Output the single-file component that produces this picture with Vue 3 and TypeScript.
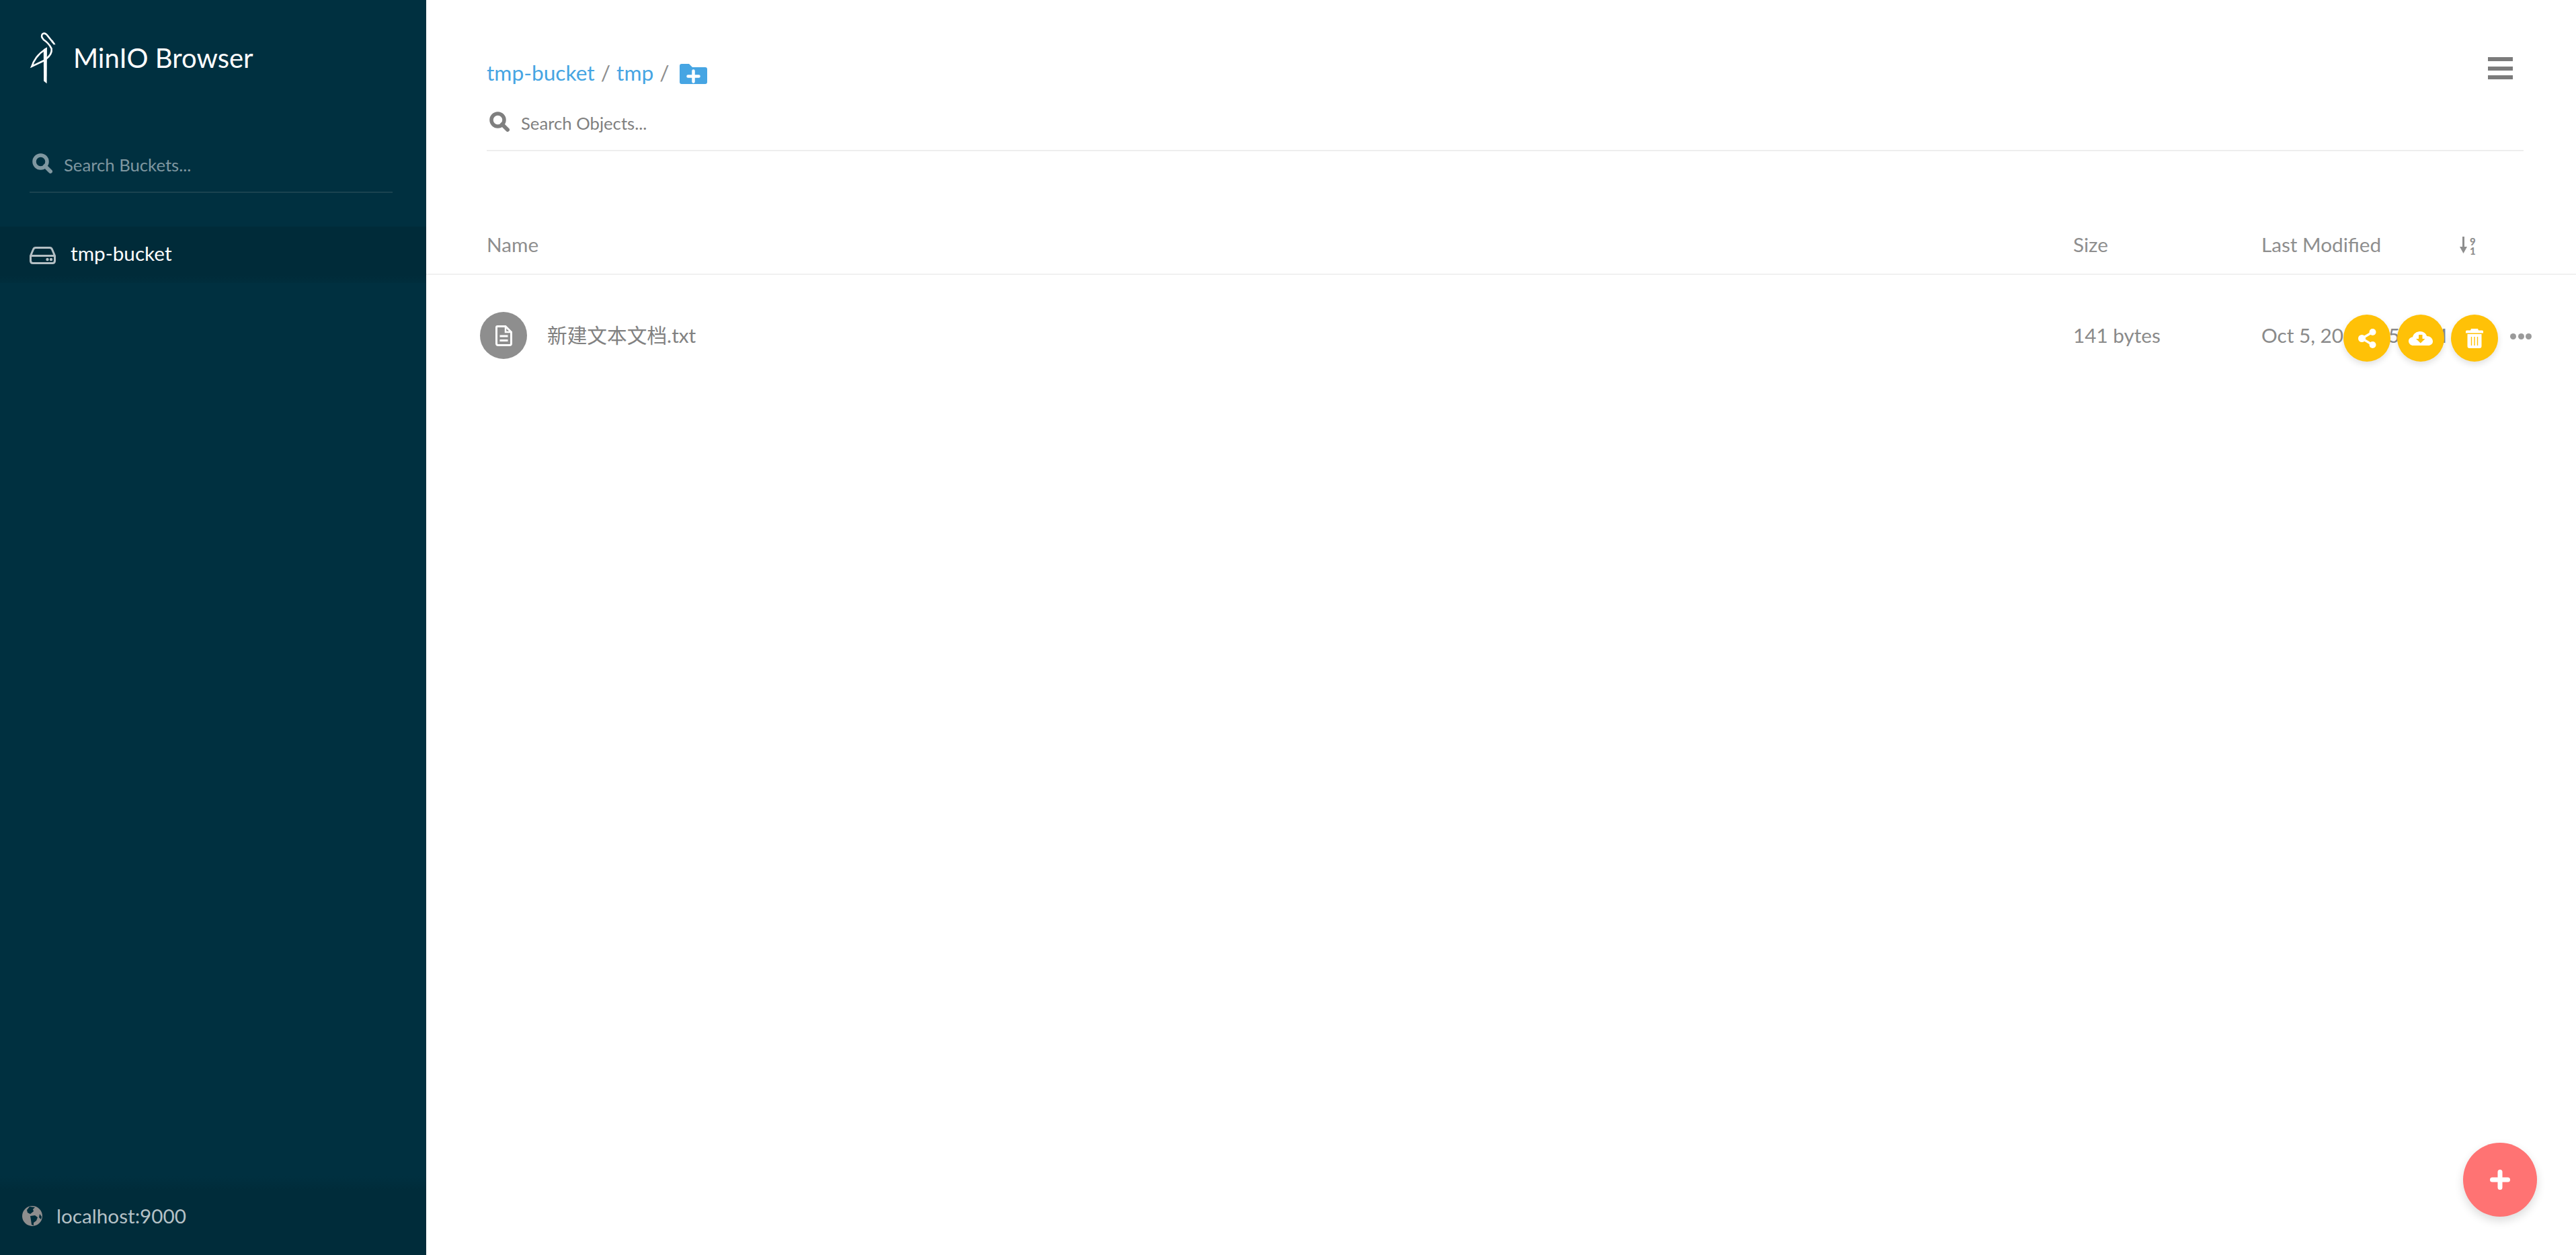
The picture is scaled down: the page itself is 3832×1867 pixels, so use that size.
<script setup lang="ts">
interface FileRow {
  name: string
  size: string
  modified: string
}
const files: FileRow[] = [
  { name: '新建文本文档.txt', size: '141 bytes', modified: 'Oct 5, 2019 3:51 PM' },
]
</script>

<template>
  <div class="app">
    <aside class="sidebar">
      <div class="brand">
        <svg class="logo" viewBox="70 45 125 245" aria-hidden="true">
          <path class="logo-line" d="M186,105 L150,60 Q138,49 129,58 Q121,68 136,84 Q160,100 172,125 Q176,150 146,174" />
          <path class="logo-line" d="M141,130 C108,150 88,182 81,207 L146,176" />
          <path class="logo-fill" d="M135,128 L151,118 L150,287 L136,275 Z" />
          <path class="logo-fill" d="M72,215 L84,195 L90,205 Z" />
          <path class="logo-fill" d="M191,108 L176,84 L172,95 Z" />
        </svg>
        <span class="brand-title">MinIO Browser</span>
      </div>
      <div class="bucket-search">
        <svg class="search-icon" viewBox="0 0 30 30" aria-hidden="true">
          <circle cx="12.5" cy="12.5" r="9.5" fill="none" stroke="currentColor" stroke-width="5.5" />
          <path d="M19,19 L27,27" stroke="currentColor" stroke-width="6" stroke-linecap="round" />
        </svg>
        <span>Search Buckets...</span>
      </div>
      <nav class="buckets">
        <div class="bucket active">
          <svg class="hdd" viewBox="0 0 39 26" aria-hidden="true">
            <path d="M9,1.5 H30 Q32.5,1.5 33.5,4 L37.5,13.5 V21 Q37.5,24.5 34,24.5 H5 Q1.5,24.5 1.5,21 V13.5 L5.5,4 Q6.5,1.5 9,1.5 Z M1.5,13.5 H37.5" fill="none" stroke="currentColor" stroke-width="3" />
            <circle cx="26.5" cy="19" r="2.2" fill="currentColor" />
            <circle cx="32" cy="19" r="2.2" fill="currentColor" />
          </svg>
          <span>tmp-bucket</span>
        </div>
      </nav>
      <footer class="host">
        <svg class="globe" viewBox="0 0 30 30" aria-hidden="true">
          <circle cx="15" cy="15" r="15" fill="#8e8e8e" />
          <path fill="#002d3b" d="M11,1 L19,2 L16,5 L17,8 L12,12 L8,10 L7,6 Z M12,15 L19,14 L23,17 L21,22 L17,25 L17,29 L14,28 L13,21 Z M26,12 L29,16 L28,20 L25,17 Z" />
        </svg>
        <span>localhost:9000</span>
      </footer>
    </aside>

    <main class="content">
      <header class="topbar">
        <div class="crumb-row">
          <div class="crumbs">
            <a class="crumb">tmp-bucket</a>
            <span class="sep">/</span>
            <a class="crumb">tmp</a>
            <span class="sep">/</span>
            <svg class="folder-add" viewBox="0 0 41 30" aria-hidden="true">
              <path fill="#46a5e3" d="M3,0 H14 L19,5 H38 Q41,5 41,8 V27 Q41,30 38,30 H3 Q0,30 0,27 V3 Q0,0 3,0 Z" />
              <path d="M12.5,18.5 H28.5 M20.5,10.5 V26.5" stroke="#fff" stroke-width="4.5" stroke-linecap="round" />
            </svg>
          </div>
          <div class="menu" aria-hidden="true"><i></i><i></i><i></i></div>
        </div>
        <div class="object-search">
          <svg class="search-icon" viewBox="0 0 30 30" aria-hidden="true">
            <circle cx="12.5" cy="12.5" r="9.5" fill="none" stroke="currentColor" stroke-width="5.5" />
            <path d="M19,19 L27,27" stroke="currentColor" stroke-width="6" stroke-linecap="round" />
          </svg>
          <span>Search Objects...</span>
        </div>
      </header>

      <div class="table-head">
        <span>Name</span>
        <span>Size</span>
        <span>Last Modified</span>
        <div class="sort">
          <svg viewBox="0 0 11 25" width="11" height="25" aria-hidden="true">
            <path d="M5.5,0 V18" stroke="#8e8e8e" stroke-width="3" />
            <path d="M0,15 H11 L5.5,25 Z" fill="#8e8e8e" />
          </svg>
          <div class="sort-digits"><span>9</span><span>1</span></div>
        </div>
      </div>

      <div v-for="file in files" :key="file.name" class="table-row">
        <div class="name-cell">
          <span class="file-badge">
            <svg viewBox="0 0 25 31" width="25" height="31" aria-hidden="true">
              <path d="M3,1.5 H15 L23.5,10 V27 Q23.5,29.5 21,29.5 H4 Q1.5,29.5 1.5,27 V3 Q1.5,1.5 3,1.5 Z" fill="none" stroke="#fff" stroke-width="3" />
              <path d="M15,2 V10 H23" fill="none" stroke="#fff" stroke-width="2.5" />
              <path d="M6.5,16 H18.5 M6.5,22.5 H18.5" stroke="#fff" stroke-width="3" />
            </svg>
          </span>
          <span>{{ file.name }}</span>
        </div>
        <span>{{ file.size }}</span>
        <span>{{ file.modified }}</span>
        <div class="row-actions">
          <button class="action" type="button" aria-label="Share">
            <svg viewBox="0 0 27 29" width="27" height="29" aria-hidden="true">
              <path d="M21.5,5 L5.5,14.5 L21.5,24" fill="none" stroke="#fff" stroke-width="3.4" />
              <circle cx="21.5" cy="5" r="5" fill="#fff" />
              <circle cx="5.5" cy="14.5" r="5.5" fill="#fff" />
              <circle cx="21.5" cy="24" r="5" fill="#fff" />
            </svg>
          </button>
          <button class="action" type="button" aria-label="Download">
            <svg viewBox="0 0 36 21" width="36" height="21" aria-hidden="true">
              <path fill="#fff" d="M7,21 C3,21 0,18 0,14.5 C0,11 3,8.5 6,8.5 C7,3.5 12,0 17,0 C22,0 26,3 27,7 C32,7 36,10.5 36,15 C36,18.5 33,21 29,21 Z" />
              <path fill="#ffc107" d="M15,5 H20.5 V11 H24.5 L17.75,17.5 L11,11 H15 Z" />
            </svg>
          </button>
          <button class="action" type="button" aria-label="Delete">
            <svg viewBox="0 0 26 29" width="26" height="29" aria-hidden="true">
              <path fill="#fff" d="M8,0 H18 L19,2.5 H24.5 Q26,2.5 26,4 V6.5 H0 V4 Q0,2.5 1.5,2.5 H7 Z" />
              <path fill="#fff" d="M2.5,8 H23.5 V26 Q23.5,29 20.5,29 H5.5 Q2.5,29 2.5,26 Z" />
              <path d="M8.5,12 V25 M13,12 V25 M17.5,12 V25" stroke="#ffc107" stroke-width="1.4" />
            </svg>
          </button>
          <div class="more" aria-hidden="true"><i></i><i></i><i></i></div>
        </div>
      </div>

      <button class="fab" type="button" aria-label="Add">
        <svg viewBox="0 0 30 30" width="30" height="30" aria-hidden="true">
          <path d="M3.5,15 H26.5 M15,3.5 V26.5" stroke="#fff" stroke-width="7" stroke-linecap="round" />
        </svg>
      </button>
    </main>
  </div>
</template>

<style>
html,
body {
  margin: 0;
  overflow: hidden;
  background: #fff;
}
</style>

<style scoped>
.app {
  display: flex;
  height: 100vh;
  font-family: Lato, "Noto Sans CJK SC", sans-serif;
  color: #818181;
}

/* sidebar */
.sidebar {
  width: 634px;
  flex: none;
  display: flex;
  flex-direction: column;
  background: #003040;
}
.brand {
  display: flex;
  align-items: center;
  gap: 25px;
  padding: 46px 0 0 44px;
  height: 80px;
  font-size: 40px;
  line-height: 48px;
  color: #fff;
}
.logo {
  width: 40px;
  height: 80px;
  flex: none;
}
.logo-line {
  fill: none;
  stroke: #fff;
  stroke-width: 8;
}
.logo-fill {
  fill: #fff;
}
.bucket-search {
  display: flex;
  align-items: center;
  gap: 17px;
  margin: 94px 50px 0 44px;
  padding: 0 0 15px 4px;
  height: 50px;
  border-bottom: 2px solid #1a4350;
  font-size: 25.7px;
  line-height: 50px;
  color: #7f97a0;
}
.search-icon {
  width: 30px;
  height: 30px;
  flex: none;
  position: relative;
  top: -2px;
}
.buckets {
  flex: 1;
  padding-top: 50px;
}
.bucket {
  display: flex;
  align-items: center;
  gap: 22px;
  height: 79px;
  padding: 0 0 5px 44px;
  font-size: 29.7px;
  line-height: 40px;
  color: #fff;
  background: linear-gradient(180deg, #002b39 0%, #002b39 86%, #002e3d 100%);
}
.hdd {
  width: 39px;
  height: 26px;
  flex: none;
  color: #b4bfc4;
  position: relative;
  top: 3px;
}
.host {
  display: flex;
  align-items: center;
  gap: 21px;
  height: 117px;
  padding-left: 33px;
  font-size: 29.7px;
  line-height: 40px;
  color: #b5c1c6;
  background: linear-gradient(180deg, #003040 0%, #002c3a 18%);
}
.globe {
  width: 30px;
  height: 30px;
  flex: none;
}

/* main */
.content {
  flex: 1;
  min-width: 0;
  position: relative;
  background: #fff;
}
.topbar {
  padding: 85px 78px 0 90px;
}
.crumb-row {
  display: flex;
  justify-content: space-between;
  align-items: flex-start;
}
.crumbs {
  display: flex;
  align-items: center;
  font-size: 31.7px;
  line-height: 46px;
}
.crumb {
  color: #46a5e3;
}
.sep {
  margin: 0 9px;
  color: #8e8e8e;
}
.folder-add {
  width: 41px;
  height: 30px;
  margin: 4px 0 0 6px;
  flex: none;
}
.menu {
  display: flex;
  flex-direction: column;
  gap: 7.5px;
  width: 37px;
  margin-right: 16px;
}
.menu i {
  display: block;
  height: 6px;
  background: #7b7b7b;
}
.object-search {
  display: flex;
  align-items: center;
  gap: 17px;
  margin-top: 27px;
  padding: 0 0 15px 4px;
  height: 50px;
  border-bottom: 2px solid #eee;
  font-size: 25.7px;
  line-height: 50px;
  color: #7f7f7f;
}
.table-head,
.table-row {
  display: grid;
  grid-template-columns: 2360px 280px 295px 1fr;
  padding-left: 90px;
  align-items: center;
  font-size: 29.7px;
  line-height: 46px;
}
.table-head {
  margin-top: 116px;
  padding-bottom: 20px;
  border-bottom: 2px solid #f0f0f0;
  color: #8e8e8e;
}
.sort {
  display: flex;
  gap: 4px;
  height: 25px;
}
.sort-digits {
  display: flex;
  flex-direction: column;
  font-weight: 900;
  font-size: 15px;
  line-height: 14px;
  color: #8e8e8e;
}
.table-row {
  position: relative;
  height: 180px;
  color: #8a8a8a;
}
.name-cell {
  display: flex;
  align-items: center;
  gap: 30px;
  margin-left: -10px;
  color: #818181;
}
.file-badge {
  width: 70px;
  height: 70px;
  flex: none;
  display: flex;
  align-items: center;
  justify-content: center;
  border-radius: 50%;
  background: #8e8e8e;
}
.row-actions {
  position: absolute;
  top: 59px;
  right: 66px;
  display: flex;
  align-items: center;
  gap: 10px;
}
.action {
  width: 70px;
  height: 70px;
  padding: 0;
  border: 0;
  border-radius: 50%;
  display: flex;
  align-items: center;
  justify-content: center;
  background: #ffc107;
  box-shadow: 0 4px 10px rgba(0, 0, 0, 0.12);
}
.more {
  display: flex;
  gap: 2.5px;
  margin: -6px 0 0 8px;
}
.more i {
  display: block;
  width: 9px;
  height: 9px;
  border-radius: 50%;
  background: #9a9a9a;
}
.fab {
  position: absolute;
  right: 58px;
  bottom: 57px;
  width: 110px;
  height: 110px;
  padding: 0;
  border: 0;
  border-radius: 50%;
  display: flex;
  align-items: center;
  justify-content: center;
  background: #ff7373;
  box-shadow: 0 6px 14px rgba(0, 0, 0, 0.14);
}
</style>
